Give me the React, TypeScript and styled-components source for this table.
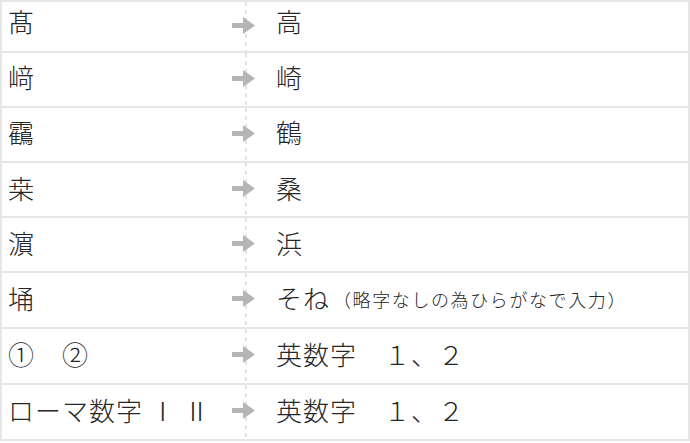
import React from 'react';
import styled, { createGlobalStyle } from 'styled-components';

const GlobalStyle = createGlobalStyle`
  html, body {
    margin: 0;
    padding: 0;
    background: #ffffff;
  }
  body {
    font-family: "Noto Sans CJK JP", "Noto Sans", sans-serif;
    font-weight: 300;
    color: #262626;
  }
`;

type Row = {
  from: string;
  to: string;
  note?: string;
  height: number; // content height, the 2px line is added on top
  lift?: number; // extra bottom padding to raise the text
};

const rows: Row[] = [
  { from: '髙', to: '高', height: 49, lift: 8 },
  { from: '﨑', to: '崎', height: 53, lift: 2 },
  { from: '靍', to: '鶴', height: 53, lift: 2 },
  { from: '桒', to: '桑', height: 53 },
  { from: '濵', to: '浜', height: 53 },
  { from: '埇', to: 'そね', note: '（略字なしの為ひらがなで入力）', height: 54 },
  { from: '①　②', to: '英数字　１、２', height: 54 },
  { from: 'ローマ数字 Ⅰ Ⅱ', to: '英数字　１、２', height: 54 },
];

const Arrow = () => (
  <ArrowMark width="23" height="17" viewBox="0 0 23 17" aria-hidden="true">
    <rect x="0" y="6" width="12" height="5" fill="#b5b5b5" />
    <polygon points="11,0 23,8.5 11,17" fill="#b5b5b5" />
  </ArrowMark>
);

export default function App() {
  return (
    <>
      <GlobalStyle />
      <Table>
        {rows.map((r, i) => (
          <TableRow key={i} $h={r.height} $last={i === rows.length - 1}>
            <FromCell $lift={r.lift ?? 0}>{r.from}</FromCell>
            <ToCell $lift={r.lift ?? 0}>
              <Arrow />
              <span>{r.to}</span>
              {r.note && <Note>{r.note}</Note>}
            </ToCell>
          </TableRow>
        ))}
      </Table>
    </>
  );
}

const Table = styled.div`
  width: 690px;
  box-sizing: border-box;
  border-left: 2px solid #e6e6e6;
  border-right: 2px solid #e6e6e6;
  display: flex;
  flex-direction: column;
`;

const TableRow = styled.div<{ $h: number; $last: boolean }>`
  display: grid;
  grid-template-columns: 243px 1fr;
  height: ${(p) => p.$h}px;
  border-top: 2px solid #e6e6e6;
  border-bottom: ${(p) => (p.$last ? '2px solid #e6e6e6' : 'none')};
`;

const FromCell = styled.div<{ $lift: number }>`
  display: flex;
  align-items: center;
  padding: 0 0 ${(p) => 5 + p.$lift}px 6px;
  font-size: 26px;
  letter-spacing: 1px;
  white-space: nowrap;
`;

const ToCell = styled.div<{ $lift: number }>`
  position: relative;
  display: flex;
  align-items: center;
  padding: 0 0 ${(p) => 5 + p.$lift}px 31px;
  font-size: 26px;
  letter-spacing: 1px;
  white-space: nowrap;
  background-image: repeating-linear-gradient(
    to bottom,
    #e3e3e3 0,
    #e3e3e3 4px,
    transparent 4px,
    transparent 8px
  );
  background-size: 2px 100%;
  background-repeat: no-repeat;
  background-position: 0 0;
`;

const ArrowMark = styled.svg`
  position: absolute;
  left: -13px;
  top: 50%;
  margin-top: -10px;
`;

const Note = styled.span`
  font-size: 18px;
  letter-spacing: 1.6px;
  margin-left: 3px;
  padding-top: 3px;
`;
